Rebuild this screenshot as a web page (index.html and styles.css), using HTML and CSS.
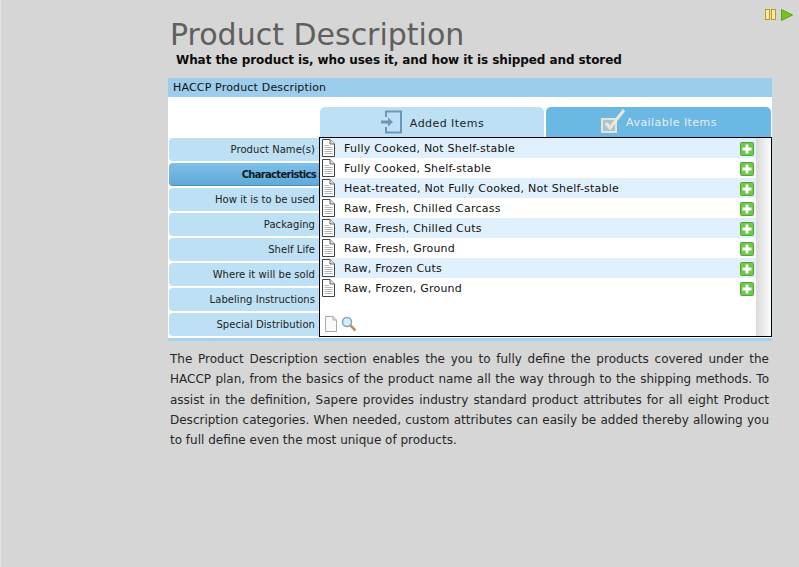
FILE: index.html
```html
<!DOCTYPE html>
<html lang="en">
<head>
<meta charset="utf-8">
<title>Product Description</title>
<link rel="stylesheet" href="styles.css">
</head>
<body>
<svg class="defs" width="0" height="0" aria-hidden="true">
  <symbol id="doc" viewBox="0 0 14 18">
    <path d="M1.500.5H9L13.500 5V17.500H1.500Z" fill="#fff" stroke="#444"/>
    <path d="M9 .5V5H13.500" fill="#e4e4e4" stroke="#666"/>
    <path d="M3.500 6.500H8M3.500 8.500H11.500M3.500 10.500H11.500M3.500 12.500H11.500M3.500 14.500H11.500" stroke="#b4b4b4"/>
  </symbol>
  <symbol id="plus" viewBox="0 0 14 14">
    <rect x=".5" y=".5" width="13" height="13" rx="1" fill="#6ec94a" stroke="#55a636"/>
    <path d="M7 2.500V11.500M2.500 7H11.500" stroke="#fff" stroke-width="2.800"/>
  </symbol>
</svg>
<div class="controls">
  <svg width="11" height="12" viewBox="0 0 11 12"><rect x=".5" y=".5" width="4" height="10" fill="#f8e9a8" stroke="#c09a18"/><rect x="6.500" y=".5" width="4" height="10" fill="#f8e9a8" stroke="#c09a18"/></svg>
  <svg width="12" height="12" viewBox="0 0 12 12"><path d="M.5.5 11.500 6 .5 11.500Z" fill="#74c41f" stroke="#5aa512"/></svg>
</div>
<main class="page">
  <h1 class="title">Product Description</h1>
  <p class="subtitle">What the product is, who uses it, and how it is shipped and stored</p>
  <section class="panel">
    <header class="panel-head">HACCP Product Description</header>
    <div class="panel-body">
      <nav class="side">
        <div class="side-item">Product Name(s)</div>
        <div class="side-item active">Characteristics</div>
        <div class="side-item">How it is to be used</div>
        <div class="side-item">Packaging</div>
        <div class="side-item">Shelf Life</div>
        <div class="side-item">Where it will be sold</div>
        <div class="side-item">Labeling Instructions</div>
        <div class="side-item">Special Distribution</div>
      </nav>
      <div class="content">
        <div class="tabs">
          <div class="tab">
            <svg width="24" height="24" viewBox="0 0 24 24" fill="none" stroke="#7096b6" stroke-width="2"><path d="M6 7V1.500H21V22.500H6V17"/><path d="M1 12H9" stroke-width="3"/><path d="M8 7.500 13 12 8 16.500Z" fill="#7096b6" stroke="none"/></svg>
            <span>Added Items</span>
          </div>
          <div class="tab tab-on">
            <svg width="26" height="26" viewBox="0 0 26 26" fill="none"><rect x="2" y="11" width="14" height="13" fill="#a3c6da" stroke="#ece3cf" stroke-width="2"/><path d="M6 15 10 20 24 2" stroke="#f0e6d2" stroke-width="3"/></svg>
            <span>Available Items</span>
          </div>
        </div>
        <div class="box">
          <div class="rows">
            <ul class="list">
              <li class="row alt"><svg class="doc"><use href="#doc"/></svg><span class="row-text">Fully Cooked, Not Shelf-stable</span><svg class="plus"><use href="#plus"/></svg></li>
              <li class="row"><svg class="doc"><use href="#doc"/></svg><span class="row-text">Fully Cooked, Shelf-stable</span><svg class="plus"><use href="#plus"/></svg></li>
              <li class="row alt"><svg class="doc"><use href="#doc"/></svg><span class="row-text">Heat-treated, Not Fully Cooked, Not Shelf-stable</span><svg class="plus"><use href="#plus"/></svg></li>
              <li class="row"><svg class="doc"><use href="#doc"/></svg><span class="row-text">Raw, Fresh, Chilled Carcass</span><svg class="plus"><use href="#plus"/></svg></li>
              <li class="row alt"><svg class="doc"><use href="#doc"/></svg><span class="row-text">Raw, Fresh, Chilled Cuts</span><svg class="plus"><use href="#plus"/></svg></li>
              <li class="row"><svg class="doc"><use href="#doc"/></svg><span class="row-text">Raw, Fresh, Ground</span><svg class="plus"><use href="#plus"/></svg></li>
              <li class="row alt"><svg class="doc"><use href="#doc"/></svg><span class="row-text">Raw, Frozen Cuts</span><svg class="plus"><use href="#plus"/></svg></li>
              <li class="row"><svg class="doc"><use href="#doc"/></svg><span class="row-text">Raw, Frozen, Ground</span><svg class="plus"><use href="#plus"/></svg></li>
            </ul>
            <div class="tools">
              <svg width="14" height="16" viewBox="0 0 14 16"><path d="M1.500.5H9L12.500 4V15.500H1.500Z" fill="#fafafa" stroke="#aaa"/><path d="M9 .5V4H12.500" fill="#ddd" stroke="#aaa"/></svg>
              <svg width="16" height="16" viewBox="0 0 16 16" fill="none"><circle cx="6" cy="6" r="4.500" fill="#d6eef8" stroke="#7fa6ba" stroke-width="1.500"/><path d="M9.500 9.500 14.500 14.500" stroke="#b8955a" stroke-width="2.500"/></svg>
            </div>
          </div>
          <div class="scroll"></div>
        </div>
      </div>
    </div>
  </section>
  <p class="desc">The Product Description section enables the you to fully define the products covered under the HACCP plan, from the basics of the product name all the way through to the shipping methods. To assist in the definition, Sapere provides industry standard product attributes for all eight Product Description categories. When needed, custom attributes can easily be added thereby allowing you to full define even the most unique of products.</p>
</main>
</body>
</html>
```
FILE: styles.css
```css
* { box-sizing: border-box; }
html, body { margin: 0; height: 100%; }
body {
  background: #d6d6d6;
  font-family: "DejaVu Sans", Verdana, sans-serif;
  color: #111;
  overflow: hidden;
  border-left: 1px solid #e4e4e4;
}
.defs { position: absolute; }
.controls {
  position: absolute;
  top: 9px;
  left: 765px;
  display: flex;
  gap: 5px;
}
.page {
  width: 604px;
  margin-left: 167px;
  padding-top: 17px;
}
.title {
  margin: 0 0 0 2px;
  font-size: 30px;
  line-height: 36px;
  font-weight: 400;
  color: #5f5f5f;
}
.subtitle {
  margin: 0 0 0 8px;
  font-size: 12px;
  line-height: 15px;
  font-weight: 700;
  letter-spacing: -0.08px;
  color: #0c0c0c;
}
.panel {
  margin-top: 10px;
  background: #fff;
  border-bottom: 3px solid #a8d2ec;
  height: 263px;
  box-shadow: 1px 1px 0 #c4dbe8;
}
.panel-head {
  height: 19px;
  padding-left: 5px;
  background: #9ccdec;
  font-size: 11px;
  line-height: 19px;
  letter-spacing: 0.17px;
  color: #111;
}
.panel-body {
  display: flex;
  padding-left: 1px;
}
.side {
  width: 150px;
  padding-top: 41px;
  display: flex;
  flex-direction: column;
  gap: 2px;
}
.side-item {
  height: 23px;
  padding-right: 4px;
  border-radius: 4px 0 0 4px;
  background: #bde0f4;
  text-align: right;
  font-size: 10px;
  letter-spacing: 0.05px;
  line-height: 23px;
  color: #222;
}
.side-item.active {
  background: linear-gradient(#7cc0e8, #5fa9d9);
  border-bottom: 1px solid #4d8fbd;
  font-weight: 700;
  letter-spacing: -0.7px;
  padding-right: 3px;
  color: #0e1a28;
}
.content {
  width: 452px;
  padding-top: 10px;
}
.tabs {
  display: flex;
  gap: 2px;
  height: 30px;
  padding-left: 1px;
}
.tab {
  flex: 1;
  display: flex;
  align-items: center;
  justify-content: center;
  gap: 6px;
  border-radius: 5px 5px 0 0;
  background: #bde0f4;
  font-size: 11px;
  letter-spacing: 0.45px;
  color: #222;
}
.tab span { padding-top: 3px; }
.tab-on {
  flex: none;
  width: 225px;
  background: #6cb8e4;
  color: #e6eef0;
  padding: 0 0 2px;
  gap: 0;
}
.box {
  display: flex;
  height: 200px;
  border: 1px solid #000;
  background: #fff;
  width: 453px;
}
.rows {
  flex: 1;
  display: flex;
  flex-direction: column;
}
.list {
  list-style: none;
  margin: 0;
  padding: 0;
}
.row {
  display: flex;
  align-items: center;
  height: 20px;
  padding: 0 0 0 1px;
}
.row.alt { background: #e0f0fd; }
.doc {
  width: 14px;
  height: 18px;
  flex: none;
}
.row-text {
  flex: 1;
  margin-left: 9px;
  font-size: 11px;
  letter-spacing: 0.23px;
  color: #111;
}
.plus {
  width: 14px;
  height: 14px;
  margin: 2px 2px 0 0;
  flex: none;
}
.tools {
  display: flex;
  gap: 3px;
  padding: 18px 0 0 4px;
}
.scroll {
  width: 15px;
  background: linear-gradient(90deg, #dadada, #fcfcfc);
}
.desc {
  margin: 8px 0 0 2px;
  width: 599px;
  font-size: 12px;
  line-height: 20.3px;
  text-align: justify;
  color: #262626;
}
```
